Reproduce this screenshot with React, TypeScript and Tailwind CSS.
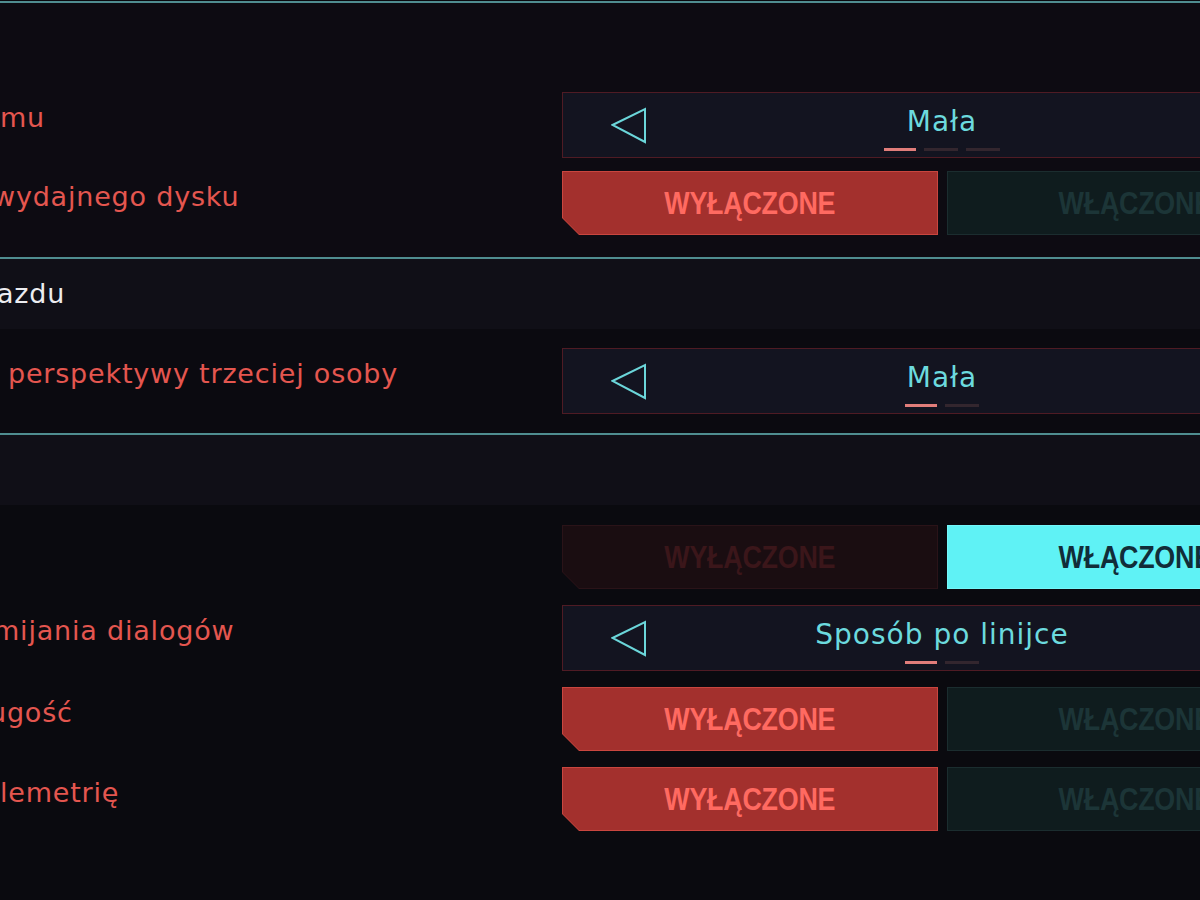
import React from "react";

type Row =
  | { kind: "select"; label: string; shift: string; value: string; steps: number; active: number }
  | { kind: "toggle"; label: string; shift: string; on: boolean };

// Left-pointing outline arrow used by the option selectors
function ArrowLeft() {
  return (
    <svg width="36" height="37" viewBox="0 0 36 37" className="shrink-0">
      <polygon points="1.5,18 34,2 34,35" fill="none" stroke="#6bd6da" strokeWidth="2" strokeLinejoin="miter" />
    </svg>
  );
}

function Selector({ value, steps, active }: { value: string; steps: number; active: number }) {
  return (
    <div className="relative h-[66px] w-[760px] shrink-0 border border-[#4f1b24] bg-[#131420]">
      <div className="absolute left-[48px] top-[14px]">
        <ArrowLeft />
      </div>
      <div className="flex h-full flex-col items-center pt-[12px]">
        <span className="text-[28px] leading-[34px] tracking-[1px] text-[#6cdade]">{value}</span>
        <div className="mt-[9px] flex gap-[8px]">
          {Array.from({ length: steps }).map((_, i) => (
            <div
              key={i}
              className={i === active ? "h-[3px] w-[32px] bg-[#e17d7a]" : "h-[3px] w-[34px] bg-[#33262e]"}
            />
          ))}
        </div>
      </div>
    </div>
  );
}

function Toggle({ on }: { on: boolean }) {
  return (
    <div className="flex h-[64px] w-[760px] shrink-0 gap-[9px] font-['Liberation_Sans',sans-serif] font-bold">
      {/* off half, chamfered bottom-left corner */}
      <div
        className={
          "h-full w-[376px] shrink-0 p-[1px] [clip-path:polygon(0_0,100%_0,100%_100%,17px_100%,0_calc(100%-17px))] " +
          (on ? "bg-[#2a1318]" : "bg-[#c9463f]")
        }
      >
        <div
          className={
            "flex h-full items-center justify-center [clip-path:polygon(0_0,100%_0,100%_100%,16px_100%,0_calc(100%-16px))] " +
            (on ? "bg-[#1a0d11] text-[#3b161a]" : "bg-[#a3302d] text-[#ff6a61]")
          }
        >
          <span className="scale-x-[0.84] text-[32px] tracking-[-0.3px]">WYŁĄCZONE</span>
        </div>
      </div>
      <div
        className={
          "flex h-full w-[376px] shrink-0 items-center justify-center border " +
          (on ? "border-[#74f7fa] bg-[#5ff2f5] text-[#112d39]" : "border-[#1b2d2f] bg-[#0f1c1e] text-[#1c3537]")
        }
      >
        <span className="scale-x-[0.84] text-[32px] tracking-[-0.3px]">WŁĄCZONE</span>
      </div>
    </div>
  );
}

function SettingRow({ row }: { row: Row }) {
  return (
    <div className="flex">
      <div className="w-[562px] shrink-0 overflow-hidden pt-[10px]">
        <div className={"whitespace-nowrap text-[27px] leading-[32px] tracking-[0.8px] text-[#e4564f] " + row.shift}>
          {row.label}
        </div>
      </div>
      {row.kind === "select" ? (
        <Selector value={row.value} steps={row.steps} active={row.active} />
      ) : (
        <Toggle on={row.on} />
      )}
    </div>
  );
}

function Divider() {
  return <div className="h-[2px] bg-[#4f8d90]" />;
}

function SectionHeader({ title, shift }: { title: string; shift: string }) {
  return (
    <div className="h-[70px] overflow-hidden bg-[#100f17] pt-[19px]">
      <div className={"whitespace-nowrap text-[27px] leading-[32px] tracking-[0.8px] text-[#ececf0] " + shift}>{title}</div>
    </div>
  );
}

export default function App() {
  return (
    <div className="h-[900px] w-[1200px] overflow-hidden bg-[#0a0a0f] font-['DejaVu_Sans',sans-serif]">
      <div className="pt-[1px]">
        <Divider />
      </div>

      {/* storage section */}
      <div className="flex flex-col gap-[13px] bg-[#0d0b12] pb-[22px] pt-[89px]">
        <SettingRow row={{ kind: "select", label: "mu", shift: "", value: "Mała", steps: 3, active: 0 }} />
        <SettingRow row={{ kind: "toggle", label: "wydajnego dysku", shift: "-ml-[7px]", on: false }} />
      </div>

      <Divider />
      <SectionHeader title="azdu" shift="-ml-[3px]" />
      <div className="bg-[#0b0a10] pb-[19px] pt-[19px]">
        <SettingRow
          row={{ kind: "select", label: "perspektywy trzeciej osoby", shift: "ml-[8px]", value: "Mała", steps: 2, active: 0 }}
        />
      </div>

      <Divider />
      <SectionHeader title="" shift="" />
      <div className="flex flex-col gap-[16px] pt-[20px]">
        <SettingRow row={{ kind: "toggle", label: "", shift: "", on: true }} />
        <SettingRow
          row={{ kind: "select", label: "mijania dialogów", shift: "-ml-[7px]", value: "Sposób po linijce", steps: 2, active: 0 }}
        />
        <SettingRow row={{ kind: "toggle", label: "ugość", shift: "-ml-[11px]", on: false }} />
        <SettingRow row={{ kind: "toggle", label: "lemetrię", shift: "", on: false }} />
      </div>
    </div>
  );
}
